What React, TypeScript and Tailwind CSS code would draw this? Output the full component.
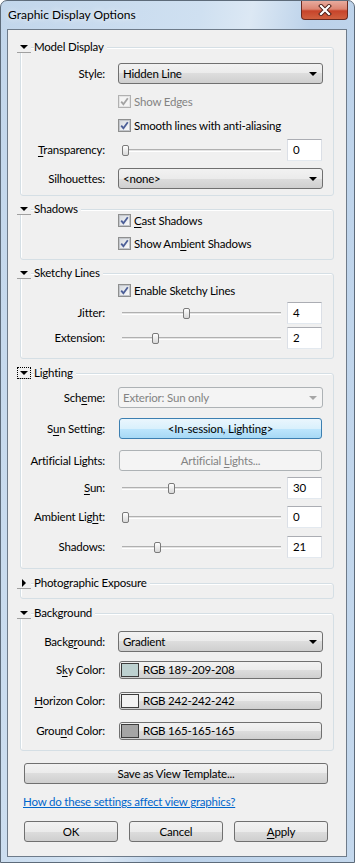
import React from "react";

const btnGrad =
  "bg-[linear-gradient(#f2f2f2_0%,#ebebeb_50%,#dddddd_50%,#cfcfcf_100%)]";

function Toggle({ open, focus }: { open: boolean; focus?: boolean }) {
  return (
    <div
      className={`flex h-[12px] w-[14px] shrink-0 items-center justify-center border-b border-[#a0a0a0] bg-[#f0f0f0] ${
        focus ? "outline-1 outline-dotted outline-black -outline-offset-1" : ""
      }`}
    >
      {open ? (
        <div className="h-0 w-0 border-x-[4px] border-t-[4px] border-x-transparent border-t-black" />
      ) : (
        <div className="h-0 w-0 border-y-[4px] border-l-[4px] border-y-transparent border-l-black" />
      )}
    </div>
  );
}

function Group({
  title,
  open = true,
  focus,
  className,
  boxClass,
  children,
}: {
  title: string;
  open?: boolean;
  focus?: boolean;
  className: string;
  boxClass: string;
  children?: React.ReactNode;
}) {
  return (
    <div className={`ml-[9px] mr-[12px] ${className}`}>
      <div className="relative z-10 flex h-[12px] items-center">
        <Toggle open={open} focus={focus} />
        <span className="ml-[3px] bg-[#f0f0f0] pr-[3px] leading-[12px]">{title}</span>
      </div>
      <div
        className={`-mt-[6px] ml-[3px] rounded-[3px] border border-[#d5dfe5] pr-[10px] shadow-[inset_1px_1px_0_#ffffff] ${boxClass}`}
      >
        {children}
      </div>
    </div>
  );
}

function Row({
  label,
  className,
  children,
}: {
  label?: React.ReactNode;
  className: string;
  children: React.ReactNode;
}) {
  return (
    <div className={`flex items-center ${className}`}>
      <div className="w-[84px] shrink-0 whitespace-nowrap text-right">{label}</div>
      <div className="ml-[13px] flex flex-1 items-center">{children}</div>
    </div>
  );
}

function Select({ value, disabled }: { value: string; disabled?: boolean }) {
  return (
    <div
      className={`flex h-[21px] w-full items-center justify-between rounded-[3px] border pl-[4px] pr-[5px] ${
        disabled ? "border-[#adb2b5] bg-[#f4f4f4] text-[#838383]" : `border-[#707070] ${btnGrad}`
      }`}
    >
      <span>{value}</span>
      <div
        className={`h-0 w-0 border-x-[4px] border-t-[4px] border-x-transparent ${
          disabled ? "border-t-[#a6a6a6]" : "border-t-black"
        }`}
      />
    </div>
  );
}

function Check({ label, disabled }: { label: React.ReactNode; disabled?: boolean }) {
  return (
    <div className="flex h-[13px] items-center whitespace-nowrap">
      <div
        className={`flex h-[13px] w-[13px] shrink-0 items-center justify-center border bg-white ${
          disabled ? "border-[#b1b1b1]" : "border-[#8e8f8f]"
        }`}
      >
        <div
          className={`flex h-[11px] w-[11px] items-center justify-center border ${
            disabled
              ? "border-[#e4e4e4] bg-[#f4f4f4]"
              : "border-[#c3c6cb] bg-linear-to-br from-[#d7dbe0] to-[#fafafa]"
          }`}
        >
          <svg width="9" height="9" viewBox="0 0 9 9">
            <path
              d="M1.2 4.6 L3.4 7.2 L7.8 1.2"
              fill="none"
              stroke={disabled ? "#a3a3a3" : "#4c5f98"}
              strokeWidth="1.8"
            />
          </svg>
        </div>
      </div>
      <span className={`ml-[3px] ${disabled ? "text-[#838383]" : ""}`}>{label}</span>
    </div>
  );
}

function Slider({ value, max }: { value: number; max: number }) {
  const pct = value / max;
  return (
    <div className="relative ml-[4px] h-[22px] w-[159px] shrink-0">
      <div className="absolute left-0 right-0 top-[10px] h-[3px] border-t border-b border-t-[#b0b0b0] border-b-white bg-[#e4e4e4]" />
      <div
        className="absolute top-[6px] h-[11px] w-[7px] rounded-[2px] border border-[#7a7a7a] bg-linear-to-b from-white to-[#d8d8d8]"
        style={{ left: `calc(${pct} * (100% - 7px))` }}
      />
    </div>
  );
}

function NumBox({ value }: { value: string }) {
  return (
    <div className="ml-[6px] flex h-[22px] w-[35px] items-center border border-[#abadb3] border-x-[#dbdfe6] border-b-[#e3e9ef] bg-white pl-[5px]">
      {value}
    </div>
  );
}

function SliderRow({
  label,
  value,
  max,
  className,
}: {
  label: React.ReactNode;
  value: number;
  max: number;
  className: string;
}) {
  return (
    <Row label={label} className={className}>
      <Slider value={value} max={max} />
      <NumBox value={String(value)} />
    </Row>
  );
}

function ColorButton({ rgb, swatch }: { rgb: string; swatch: string }) {
  return (
    <div
      className={`mx-px flex h-[18px] w-full items-center rounded-[3px] border border-[#707070] pl-[1px] ${btnGrad}`}
    >
      <div className={`h-[14px] w-[18px] shrink-0 border border-[#3c3c3c] ${swatch}`} />
      <span className="ml-[4px]">{rgb}</span>
    </div>
  );
}

function Button({ children, className }: { children: React.ReactNode; className: string }) {
  return (
    <div
      className={`flex h-[21px] items-center justify-center rounded-[3px] border border-[#707070] ${btnGrad} ${className}`}
    >
      {children}
    </div>
  );
}

const U = ({ children }: { children: React.ReactNode }) => (
  <span className="underline underline-offset-2">{children}</span>
);

export default function App() {
  return (
    <div className="flex h-[863px] w-[355px] flex-col rounded-t-[7px] border border-[#5d6b7a] bg-[linear-gradient(100deg,#c2d6eb_0%,#cfe0f1_40%,#dce8f4_50%,#bcd2ea_62%,#c4d8ed_100%)] pb-[5px] font-[family-name:Lato,sans-serif] text-[11.5px] tracking-[-0.2px] text-black">
      <div className="flex h-[28px] shrink-0 items-start justify-between">
        <div className="pl-[7px] pt-[5px] text-[12px] leading-[18px] tracking-normal [text-shadow:0_0_6px_#ffffff]">
          Graphic Display Options
        </div>
        <div className="mr-[6px] flex h-[19px] w-[47px] items-center justify-center rounded-b-[4px] border border-t-0 border-[#6a2a20] bg-[linear-gradient(#e8ab9e_0%,#dc8572_45%,#c7442a_55%,#d0603f_100%)]">
          <svg width="14" height="12" viewBox="0 0 14 12">
            <path d="M3 2 L11 10 M11 2 L3 10" stroke="#4a1d16" strokeWidth="4" strokeLinecap="square" />
            <path d="M3 2 L11 10 M11 2 L3 10" stroke="#ffffff" strokeWidth="2.2" strokeLinecap="square" />
          </svg>
        </div>
      </div>

      <div className="ml-[6px] mr-[7px] flex flex-1 flex-col border border-[#6e7b8a] bg-[#f0f0f0]">
        <Group title="Model Display" className="mt-[11px]" boxClass="pb-[6px]">
          <Row label="Style:" className="mt-[15px]">
            <Select value="Hidden Line" />
          </Row>
          <Row className="mt-[11px]">
            <Check label="Show Edges" disabled />
          </Row>
          <Row className="mt-[11px]">
            <Check label="Smooth lines with anti-aliasing" />
          </Row>
          <SliderRow
            label={
              <>
                <U>T</U>ransparency:
              </>
            }
            value={0}
            max={100}
            className="mt-[7px]"
          />
          <Row label="Silhouettes:" className="mt-[7px]">
            <Select value="<none>" />
          </Row>
        </Group>

        <Group title="Shadows" className="mt-[7px]" boxClass="pb-[9px]">
          <Row className="mt-[4px]">
            <Check
              label={
                <>
                  <U>C</U>ast Shadows
                </>
              }
            />
          </Row>
          <Row className="mt-[10px]">
            <Check
              label={
                <>
                  Show Am<U>b</U>ient Shadows
                </>
              }
            />
          </Row>
        </Group>

        <Group title="Sketchy Lines" className="mt-[7px]" boxClass="pb-[9px]">
          <Row className="mt-[10px]">
            <Check label="Enable Sketchy Lines" />
          </Row>
          <SliderRow label="Jitter:" value={4} max={10} className="mt-[5px]" />
          <SliderRow label="Extension:" value={2} max={10} className="mt-[3px]" />
        </Group>

        <Group title="Lighting" focus className="mt-[8px]" boxClass="pb-[10px]">
          <Row
            label={
              <>
                Sch<U>e</U>me:
              </>
            }
            className="mt-[13px]"
          >
            <Select value="Exterior: Sun only" disabled />
          </Row>
          <Row
            label={
              <>
                S<U>u</U>n Setting:
              </>
            }
            className="mt-[10px]"
          >
            <div className="mx-px flex h-[21px] w-full items-center justify-center rounded-[3px] border border-[#3c7fb1] bg-[linear-gradient(#eaf6fd_0%,#d9f0fc_50%,#bee6fd_50%,#a7d9f5_100%)]">
              &lt;In-session, Lighting&gt;
            </div>
          </Row>
          <Row label="Artificial Lights:" className="mt-[11px]">
            <div className="mx-px flex h-[21px] w-full items-center justify-center whitespace-pre rounded-[3px] border border-[#adb2b5] bg-[#f4f4f4] text-[#838383]">
              {"Artificial "}
              <U>L</U>
              {"ights..."}
            </div>
          </Row>
          <SliderRow
            label={
              <>
                <U>S</U>un:
              </>
            }
            value={30}
            max={100}
            className="mt-[6px]"
          />
          <SliderRow
            label={
              <>
                Ambient Lig<U>h</U>t:
              </>
            }
            value={0}
            max={100}
            className="mt-[7px]"
          />
          <SliderRow label="Shadows:" value={21} max={100} className="mt-[8px]" />
        </Group>

        <Group title="Photographic Exposure" open={false} className="mt-[8px]" boxClass="h-[16px]" />

        <Group title="Background" className="mt-[8px]" boxClass="pb-[10px]">
          <Row
            label={
              <>
                Backg<U>r</U>ound:
              </>
            }
            className="mt-[17px]"
          >
            <Select value="Gradient" />
          </Row>
          <Row
            label={
              <>
                S<U>k</U>y Color:
              </>
            }
            className="mt-[9px]"
          >
            <ColorButton rgb="RGB 189-209-208" swatch="bg-[#bdd1d0]" />
          </Row>
          <Row
            label={
              <>
                <U>H</U>orizon Color:
              </>
            }
            className="mt-[13px]"
          >
            <ColorButton rgb="RGB 242-242-242" swatch="bg-[#f2f2f2]" />
          </Row>
          <Row
            label={
              <>
                Grou<U>n</U>d Color:
              </>
            }
            className="mt-[12px]"
          >
            <ColorButton rgb="RGB 165-165-165" swatch="bg-[#a5a5a5]" />
          </Row>
        </Group>

        <Button className="ml-[16px] mt-[12px] w-[304px]">Save as View Template...</Button>

        <div className="ml-[15px] mt-[10px] h-[15px] leading-[15px] text-[#0066cc] underline">
          How do these settings affect view graphics?
        </div>

        <div className="ml-[16px] mt-[12px] flex w-[304px] justify-between">
          <Button className="w-[94px]">OK</Button>
          <Button className="w-[94px]">Cancel</Button>
          <Button className="w-[94px]">
            <U>A</U>pply
          </Button>
        </div>
      </div>
    </div>
  );
}
